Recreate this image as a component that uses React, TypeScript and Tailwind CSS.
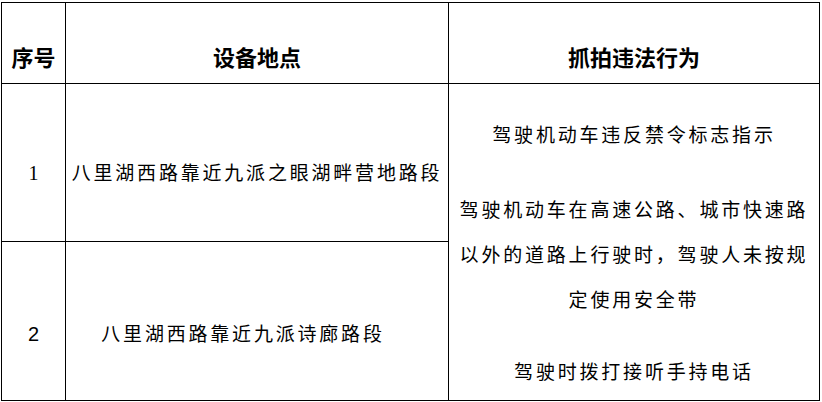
const cjk = '[font-family:"Noto_Sans_CJK_SC","Noto_Sans",sans-serif]'

export default function App() {
  return (
    <div className="bg-white w-[822px] h-[402px] pt-[2px] pl-[1px] text-black">
      <div className="w-[819px] h-[399px] border border-black grid grid-cols-[64px_383px_1fr] grid-rows-[81px_158px_158px]">
        {/* 表头 */}
        <div className={`border-r border-b border-black flex items-center justify-center pt-[26px] text-[22px] font-bold ${cjk}`}>
          序号
        </div>
        <div className={`border-r border-b border-black flex items-center justify-center pt-[26px] text-[22px] font-bold ${cjk}`}>
          设备地点
        </div>
        <div className={`border-b border-black flex items-center justify-center pt-[26px] text-[22px] font-bold ${cjk}`}>
          抓拍违法行为
        </div>

        {/* 第一行 */}
        <div className="border-r border-b border-black flex items-center justify-center pt-[20px] text-[20px] [font-family:'Liberation_Serif',serif]">
          1
        </div>
        <div className={`border-r border-b border-black flex items-center justify-center pt-[20px] text-[19px] tracking-[2.8px] whitespace-nowrap ${cjk}`}>
          八里湖西路靠近九派之眼湖畔营地路段
        </div>

        {/* 违法行为（跨两行） */}
        <div className={`row-span-2 pt-[27px] text-center text-[19px] leading-[45px] tracking-[2.8px] whitespace-nowrap ${cjk}`}>
          <p>驾驶机动车违反禁令标志指示</p>
          <p className="mt-[30px]">
            驾驶机动车在高速公路、城市快速路
            <br />
            以外的道路上行驶时，驾驶人未按规
            <br />
            定使用安全带
          </p>
          <p className="mt-[27px]">驾驶时拨打接听手持电话</p>
        </div>

        {/* 第二行 */}
        <div className="border-r border-black flex items-center justify-center pt-[25px] text-[20px] [font-family:'Liberation_Sans',sans-serif]">
          2
        </div>
        <div className={`border-r border-black flex items-center justify-center pt-[25px] pr-[28px] text-[19px] tracking-[2.8px] whitespace-nowrap ${cjk}`}>
          八里湖西路靠近九派诗廊路段
        </div>
      </div>
    </div>
  )
}
